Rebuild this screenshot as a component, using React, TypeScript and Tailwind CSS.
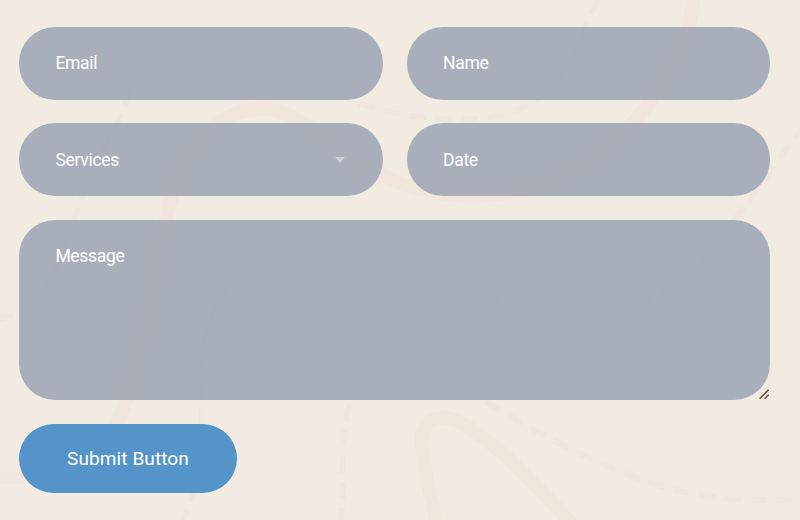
import React from "react";

const field =
  "block w-full rounded-[36px] bg-[#8a96aa]/70 px-[36.4px] text-[17.5px] tracking-[-0.3px] text-white outline-none placeholder:text-white placeholder:opacity-100";

function Trails() {
  return (
    <svg
      className="pointer-events-none absolute inset-0 h-full w-full"
      viewBox="0 0 800 520"
      fill="none"
      aria-hidden="true"
    >
      <g stroke="#efe7dc" strokeWidth="14">
        <path
          stroke="#f1e6db"
          d="M115 430C150 340 154 265 167 215C180 155 212 109 262 109C320 109 350 193 470 196C580 196 640 122 669 74C682 50 691 26 694 -5"
        />
        <path d="M437 525C431 490 421 462 422 440C422 418 440 413 459 422C495 440 535 485 574 526" />
        <path d="M0 478H24" strokeWidth="12" stroke="#f0e8dd" />
      </g>
      <g stroke="#efe7dd" strokeWidth="6" strokeDasharray="17 9">
        <path d="M-4 319C40 316 63 263 76 213C88 175 108 145 123 110C144 53 172 32 218 34C280 36 309 93 372 107C421 122 485 127 530 104C574 81 577 33 601 -5" />
        <path d="M180 525C213 468 198 400 202 360C208 288 250 250 325 254C428 256 456 286 514 306C600 337 672 300 716 244C752 198 776 163 804 126" />
        <path d="M341 525C345 474 338 430 353 396C366 365 410 351 451 377C511 422 591 462 650 483C705 500 753 503 804 498" />
      </g>
    </svg>
  );
}

function ResizeGrip() {
  return (
    <svg
      className="pointer-events-none absolute right-[0.5px] bottom-0 h-[11px] w-[11px]"
      viewBox="0 0 11 11"
      stroke="#59534f"
      strokeWidth="1.6"
      aria-hidden="true"
    >
      <path d="M0.7 9.7L9.6 0.8M5.7 9.7L9.6 5.8" />
    </svg>
  );
}

export default function App() {
  return (
    <main className="relative h-[520px] w-[800px] overflow-hidden bg-[#f2ebe1] font-[Roboto,sans-serif]">
      <Trails />
      <form
        className="relative flex w-[770.3px] flex-col items-start pt-[26.8px] pl-[19px]"
        onSubmit={(e) => e.preventDefault()}
      >
        <div className="grid w-full grid-cols-2 gap-x-6 gap-y-[23.9px]">
          <input className={`${field} h-[72.8px]`} type="email" placeholder="Email" />
          <input className={`${field} h-[72.8px]`} type="text" placeholder="Name" />
          <div className="relative">
            <select className={`${field} h-[72.8px] appearance-none pt-px`} defaultValue="Services">
              <option>Services</option>
            </select>
            <svg
              className="pointer-events-none absolute top-[33.5px] right-[38px] h-[6px] w-[10px]"
              viewBox="0 0 10 6"
              aria-hidden="true"
            >
              <path d="M0 0H10L5 6Z" fill="#d0d2d4" />
            </svg>
          </div>
          <input className={`${field} h-[72.8px]`} type="text" placeholder="Date" />
        </div>
        <div className="relative mt-[23.9px] w-full">
          <textarea
            className={`${field} h-[180px] resize-none pt-[23px] leading-[27px]`}
            placeholder="Message"
          />
          <ResizeGrip />
        </div>
        <button
          type="submit"
          className="mt-[23.8px] h-[69px] w-[218px] rounded-[36px] bg-[#5594c8] pt-[2px] text-[19px] tracking-[0.1px] text-white"
        >
          Submit Button
        </button>
      </form>
    </main>
  );
}
